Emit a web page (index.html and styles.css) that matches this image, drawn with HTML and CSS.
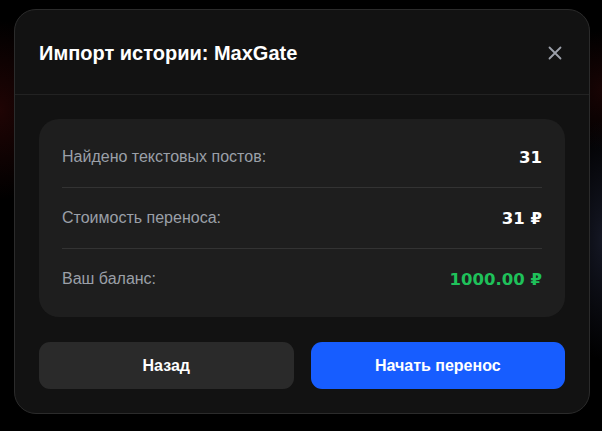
FILE: index.html
```html
<!DOCTYPE html>
<html lang="ru">
<head>
<meta charset="utf-8">
<link rel="stylesheet" href="styles.css">
</head>
<body>
<div class="backdrop">
  <div class="modal">
    <div class="modal-header">
      <h2 class="modal-title">Импорт истории: MaxGate</h2>
      <button class="close-btn" aria-label="Закрыть">
        <svg width="14" height="14" viewBox="0 0 14 14"><path d="M1.5 1.5L12.5 12.5M12.5 1.5L1.5 12.5" stroke="#9ca0aa" stroke-width="1.8" stroke-linecap="round"/></svg>
      </button>
    </div>
    <div class="modal-body">
      <div class="summary">
        <div class="row">
          <span class="label">Найдено текстовых постов:</span>
          <span class="value">31</span>
        </div>
        <div class="row">
          <span class="label">Стоимость переноса:</span>
          <span class="value">31 ₽</span>
        </div>
        <div class="row">
          <span class="label">Ваш баланс:</span>
          <span class="value green">1000.00 ₽</span>
        </div>
      </div>
      <div class="actions">
        <button class="btn btn-secondary">Назад</button>
        <button class="btn btn-primary">Начать перенос</button>
      </div>
    </div>
  </div>
</div>
</body>
</html>
```
FILE: styles.css
```css
* { box-sizing: border-box; }
html, body { margin: 0; padding: 0; }
body {
  width: 602px;
  height: 431px;
  overflow: hidden;
  background: #000;
  font-family: "Liberation Sans", Arial, sans-serif;
}
.backdrop {
  width: 602px;
  height: 431px;
  padding: 9px 13px 0 14px;
  background:
    radial-gradient(ellipse 60px 90px at 0px 110px, rgba(70, 10, 10, 0.45), transparent),
    radial-gradient(ellipse 40px 120px at 602px 240px, rgba(40, 45, 70, 0.5), transparent),
    radial-gradient(ellipse 50px 60px at 602px 90px, rgba(60, 10, 10, 0.4), transparent),
    #000;
}
.modal {
  width: 576px;
  height: 405px;
  background: #121212;
  border: 1px solid #2b2b2b;
  border-radius: 22px;
  display: flex;
  flex-direction: column;
}
.modal-header {
  display: flex;
  align-items: center;
  justify-content: space-between;
  padding: 31px 24px 29px 24px;
  border-bottom: 1px solid #222;
}
.modal-title {
  margin: 0;
  font-family: "Liberation Sans", Arial, sans-serif;
  font-size: 20px;
  line-height: 24px;
  font-weight: 700;
  color: #fff;
}
.close-btn {
  background: none;
  border: none;
  padding: 0;
  margin-right: 3px;
  width: 14px;
  height: 14px;
  display: flex;
  cursor: pointer;
}
.modal-body {
  padding: 24px 24px 0 24px;
}
.summary {
  background: #1e1e1e;
  border-radius: 20px;
  padding: 8px 23px;
}
.row {
  display: flex;
  justify-content: space-between;
  align-items: center;
  height: 61px;
  border-bottom: 1px solid #333;
}
.row:last-child { border-bottom: none; height: 60px; }
.label {
  font-family: "Liberation Sans", Arial, sans-serif;
  font-size: 16px;
  color: #9ba0a8;
}
.value {
  font-family: "DejaVu Sans", sans-serif;
  font-weight: 700;
  font-size: 16.5px;
  color: #fff;
}
.value.green { color: #1fc15a; }
.actions {
  display: flex;
  gap: 17px;
  margin-top: 25px;
}
.btn {
  flex: 1;
  height: 47px;
  border: none;
  border-radius: 11px;
  font-family: "Liberation Sans", Arial, sans-serif;
  font-weight: 700;
  font-size: 16px;
  color: #fff;
  cursor: pointer;
}
.btn-secondary { background: #2a2a2a; }
.btn-primary { background: #175dff; }
```
